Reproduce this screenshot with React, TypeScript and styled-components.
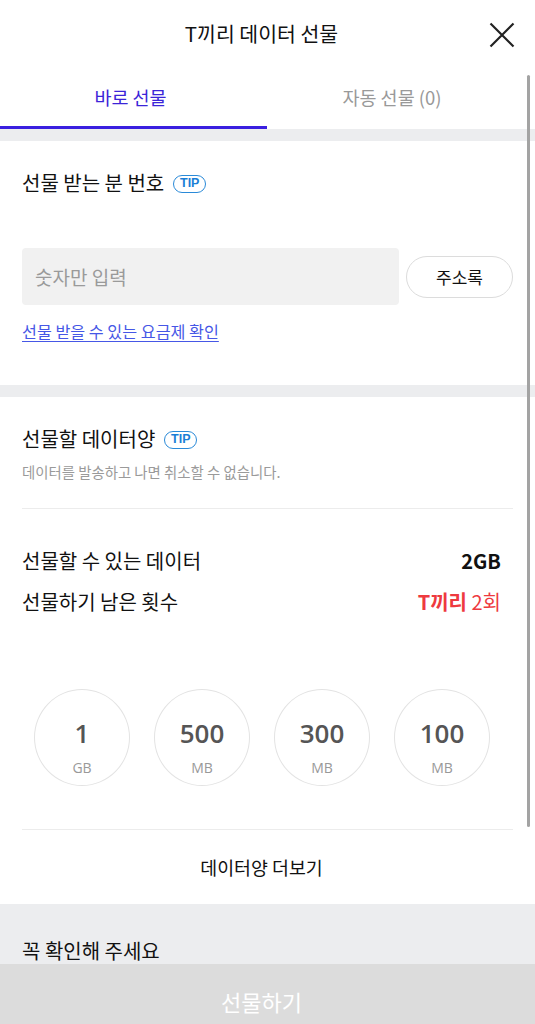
import React from "react";
import styled, { createGlobalStyle } from "styled-components";

const Global = createGlobalStyle`
  html, body { margin: 0; padding: 0; background: #fff; }
  body { font-family: "Noto Sans CJK KR", "Noto Sans", sans-serif; color: #111; }
  * { box-sizing: border-box; }
`;

const Page = styled.div`
  position: relative;
  width: 535px;
  height: 1024px;
  overflow: hidden;
  display: flex;
  flex-direction: column;
  background: #fff;
`;

const Header = styled.header`
  height: 66px;
  flex-shrink: 0;
  display: flex;
  align-items: center;
  justify-content: center;
  padding-right: 12px;
  position: relative;
`;

const Title = styled.h1`
  margin: 0;
  font-size: 20.5px;
  font-weight: 400;
  line-height: 28px;
  color: #111;
`;

const CloseButton = styled.button`
  position: absolute;
  right: 20px;
  top: 22px;
  width: 26px;
  height: 26px;
  padding: 0;
  border: 0;
  background: none;
  display: flex;
`;

const Scroll = styled.div`
  position: relative;
  flex: 1;
  overflow: hidden;
`;

const ScrollThumb = styled.div`
  position: absolute;
  right: 5px;
  top: 9px;
  width: 3px;
  height: 752px;
  border-radius: 2px;
  background: #a3a3a3;
  z-index: 5;
`;

const Tabs = styled.div`
  display: flex;
  height: 63px;
`;

const Tab = styled.div<{ $active?: boolean; $pr: number }>`
  width: ${(p) => (p.$active ? "267px" : "268px")};
  display: flex;
  align-items: center;
  justify-content: center;
  padding-right: ${(p) => p.$pr}px;
  font-size: 18.5px;
  line-height: 24px;
  padding-top: 1px;
  color: ${(p) => (p.$active ? "#3b24d8" : "#999")};
  border-bottom: 3px solid ${(p) => (p.$active ? "#3a1fe0" : "transparent")};
`;

const Gap = styled.div`
  height: 12px;
  background: #ecedef;
`;

const Section = styled.section<{ $pt: number; $pb: number }>`
  padding: ${(p) => p.$pt}px 22px ${(p) => p.$pb}px;
  background: #fff;
`;

const SectionTitle = styled.h2`
  margin: 0;
  display: flex;
  align-items: center;
  gap: 9px;
  font-size: 20px;
  font-weight: 400;
  line-height: 28px;
  color: #111;
`;

const Tip = styled.span`
  display: inline-flex;
  align-items: center;
  justify-content: center;
  width: 33px;
  height: 18px;
  border: 1.5px solid #2a8ad8;
  border-radius: 9px;
  color: #1a7fd6;
  font-family: "Liberation Sans", Arial, sans-serif;
  font-weight: 700;
  font-size: 12.5px;
  line-height: 1;
  margin-top: 1px;
`;

const InputRow = styled.div`
  display: flex;
  align-items: center;
  gap: 7px;
  margin-top: 51px;
`;

const Input = styled.input`
  width: 377px;
  height: 57px;
  border: 0;
  border-radius: 4px;
  background: #f1f1f1;
  padding: 0 13px;
  font-family: inherit;
  font-size: 19px;
  color: #111;
  outline: none;
  &::placeholder { color: #9a9a9a; }
`;

const PillButton = styled.button`
  width: 107px;
  height: 42px;
  border: 1px solid #dcdcdc;
  border-radius: 21px;
  background: #fff;
  font-family: inherit;
  font-size: 17px;
  color: #111;
  padding: 0;
`;

const Link = styled.a`
  display: inline-block;
  margin-top: 14px;
  font-size: 16.2px;
  line-height: 24px;
  color: #4657e6;
  text-decoration: underline;
  text-underline-offset: 3px;
`;

const SubText = styled.p`
  margin: 9px 0 0;
  font-size: 14.4px;
  line-height: 20px;
  color: #9a9a9a;
`;

const Divider = styled.hr<{ $mt?: number }>`
  margin: ${(p) => p.$mt ?? 0}px 0 0;
  border: 0;
  border-top: 1px solid #ececec;
`;

const InfoList = styled.div`
  display: flex;
  flex-direction: column;
  gap: 13px;
  margin: 38px 12px 0 0;
`;

const InfoRow = styled.div`
  display: flex;
  justify-content: space-between;
  align-items: center;
  font-size: 20px;
  line-height: 28px;
  color: #111;
`;

const Value = styled.span<{ $red?: boolean }>`
  color: ${(p) => (p.$red ? "#ee3a3f" : "#111")};
  font-weight: ${(p) => (p.$red ? 400 : 700)};
`;

const Strong = styled.b`
  font-weight: 700;
`;

const Circles = styled.div`
  display: flex;
  gap: 24px;
  margin: 73px 0 43px 12px;
`;

const Circle = styled.button`
  width: 96px;
  height: 97px;
  border-radius: 50%;
  border: 1px solid #e3e3e3;
  background: #fff;
  display: flex;
  flex-direction: column;
  align-items: center;
  justify-content: center;
  padding: 18px 0 0;
  font-family: inherit;
`;

const Amount = styled.span`
  font-family: "Open Sans", "Noto Sans", sans-serif;
  font-size: 26px;
  font-weight: 600;
  line-height: 32px;
  color: #555;
`;

const Unit = styled.span`
  font-family: "Open Sans", "Noto Sans", sans-serif;
  font-size: 14px;
  line-height: 18px;
  margin-top: 10px;
  color: #999;
`;

const MoreButton = styled.button`
  display: block;
  width: 100%;
  height: 74px;
  border: 0;
  background: #fff;
  font-family: inherit;
  font-size: 18.4px;
  color: #111;
  padding: 0 12px 0 0;
`;

const Notice = styled.section`
  background: #ecedef;
  padding: 33px 22px 40px;
  min-height: 200px;
`;

const BottomButton = styled.button`
  flex-shrink: 0;
  height: 60px;
  width: 100%;
  border: 0;
  background: #dcdcdc;
  color: #fff;
  font-family: inherit;
  font-size: 22px;
  line-height: 30px;
  padding: 22px 12px 0 0;
  display: flex;
  align-items: flex-start;
  justify-content: center;
`;

const amounts = [
  { n: "1", u: "GB" },
  { n: "500", u: "MB" },
  { n: "300", u: "MB" },
  { n: "100", u: "MB" },
];

export default function App() {
  return (
    <Page>
      <Global />
      <Header>
        <Title>T끼리 데이터 선물</Title>
        <CloseButton aria-label="닫기">
          <svg width="26" height="26" viewBox="0 0 26 26">
            <path d="M1.5 1.5 L24.5 24.5 M24.5 1.5 L1.5 24.5" stroke="#222" strokeWidth="2.2" fill="none" />
          </svg>
        </CloseButton>
      </Header>
      <Scroll>
        <ScrollThumb />
        <Tabs>
          <Tab $active $pr={6}>바로 선물</Tab>
          <Tab $pr={18}>자동 선물 (0)</Tab>
        </Tabs>
        <Gap />
        <Section $pt={28} $pb={42}>
          <SectionTitle>
            선물 받는 분 번호 <Tip>TIP</Tip>
          </SectionTitle>
          <InputRow>
            <Input placeholder="숫자만 입력" />
            <PillButton>주소록</PillButton>
          </InputRow>
          <Link>선물 받을 수 있는 요금제 확인</Link>
        </Section>
        <Gap />
        <Section $pt={28} $pb={0}>
          <SectionTitle>
            선물할 데이터양 <Tip>TIP</Tip>
          </SectionTitle>
          <SubText>데이터를 발송하고 나면 취소할 수 없습니다.</SubText>
          <Divider $mt={26} />
          <InfoList>
            <InfoRow>
              <span>선물할 수 있는 데이터</span>
              <Value>2GB</Value>
            </InfoRow>
            <InfoRow>
              <span>선물하기 남은 횟수</span>
              <Value $red>
                <Strong>T끼리</Strong> 2회
              </Value>
            </InfoRow>
          </InfoList>
          <Circles>
            {amounts.map((a) => (
              <Circle key={a.n}>
                <Amount>{a.n}</Amount>
                <Unit>{a.u}</Unit>
              </Circle>
            ))}
          </Circles>
          <Divider />
          <MoreButton>데이터양 더보기</MoreButton>
        </Section>
        <Notice>
          <SectionTitle>꼭 확인해 주세요</SectionTitle>
        </Notice>
      </Scroll>
      <BottomButton>선물하기</BottomButton>
    </Page>
  );
}
